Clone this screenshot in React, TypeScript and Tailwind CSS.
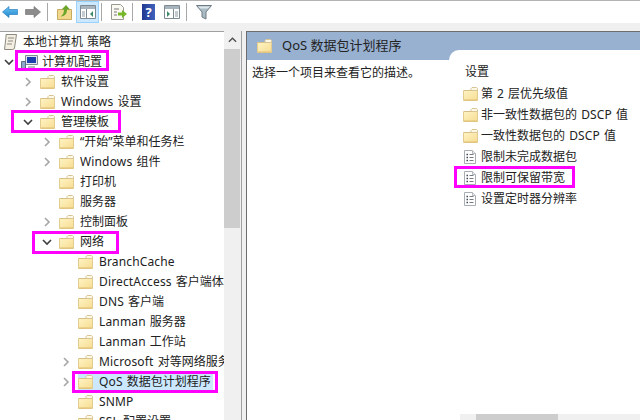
function Folder({ className = "" }: { className?: string }) {
  return (
    <svg viewBox="0 0 15 14" className={"w-[15px] h-[14px] shrink-0 " + className}>
      <defs>
        <linearGradient id="fold" x1="0" y1="0" x2="1" y2="1">
          <stop offset="0" stopColor="#fff4c4" />
          <stop offset="1" stopColor="#f6dc92" />
        </linearGradient>
      </defs>
      <path d="M0.500 3.500h14v10h-14z" fill="url(#fold)" stroke="#e2cc90" />
      <path d="M8 3.500V1.500l1-1h4.500l1 1v2z" fill="#fef9e6" stroke="#d8c596" />
      <path d="M1 3.500h7" stroke="#d6bf85" />
      <path d="M1 13h13" stroke="#dfbe72" />
    </svg>
  );
}

function PolicyIcon() {
  return (
    <svg viewBox="0 0 14 14" className="w-[14px] h-[14px] shrink-0">
      <path d="M1.500 0.500h8l3 3v10h-11z" fill="#fff" stroke="#a8adb3" />
      <path d="M9.500 .5v3h3" fill="#e8ecef" stroke="#b4b8bd" />
      <path d="M3.500 4.500h1.500M3.500 7.500h1.500M3.500 10.500h1.500" stroke="#3e4a56" strokeWidth="1.300" />
      <path d="M6.500 4.500h4M6.500 7.500h4M6.500 10.500h4" stroke="#767b82" />
    </svg>
  );
}

function Chevron({ open }: { open?: boolean }) {
  return (
    <svg viewBox="0 0 10 10" className="w-[10px] h-[10px]">
      {open ? (
        <path d="M1 3l4 4 4-4" fill="none" stroke="#3f3f3f" strokeWidth="1.600" />
      ) : (
        <path d="M3 1l4 4-4 4" fill="none" stroke="#a6a6a6" strokeWidth="1.600" />
      )}
    </svg>
  );
}

// Latin runs are a little wider in the reference than Noto Sans sets them
function Label({ text, className = "" }: { text: string; className?: string }) {
  return (
    <span className={"text-[12px] text-[#222] [word-spacing:1px] " + className}>
      {text.split(/([A-Za-z]+)/).map((part, i) =>
        i % 2 ? (
          <span key={i} className="tracking-[0.15px]">{part}</span>
        ) : (
          part
        ),
      )}
    </span>
  );
}

function TreeRow({ pl, chev, label, selected }: { pl: string; chev?: "open" | "closed"; label: string; selected?: boolean }) {
  return (
    <div className={"flex items-center h-5 whitespace-nowrap " + pl}>
      <div className="w-[12px] mr-[6px] shrink-0 flex justify-center">
        {chev && <Chevron open={chev === "open"} />}
      </div>
      <div className={"flex items-center " + (selected ? "bg-[#cce8ff] h-[18px] pr-[2px]" : "")}>
        <Folder />
        <Label text={label} className="ml-[6px]" />
      </div>
    </div>
  );
}

function Sep() {
  return <div className="w-px h-[18px] bg-[#a8a8a8] shrink-0" />;
}

function Toolbar() {
  return (
    <div className="h-[31px] shrink-0 bg-white border-t border-[#b4b4b4] flex flex-col">
      <div className="h-[22px] flex items-center">
        <svg viewBox="0 0 16 12" className="w-4 h-3 ml-[2px]">
          <defs>
            <linearGradient id="back" x1="0" y1="0" x2="0" y2="1">
              <stop offset="0" stopColor="#6cc4f2" />
              <stop offset="1" stopColor="#1f86d0" />
            </linearGradient>
          </defs>
          <path d="M.5 6l6.500-5.500v3h8.500v5H7v3z" fill="url(#back)" stroke="#2a7fbf" strokeLinejoin="round" strokeWidth=".7" />
        </svg>
        <svg viewBox="0 0 16 12" className="w-4 h-3 ml-[7px]">
          <path d="M15.500 6L9 .5v3H.5v5H9v3z" fill="#8c8c8c" stroke="#777" strokeLinejoin="round" strokeWidth=".7" />
        </svg>
        <div className="ml-[6px]"><Sep /></div>
        <svg viewBox="0 0 15 15" className="w-[15px] h-[15px] ml-[9px]">
          <path d="M0.500 4.500h14v10H.5z" fill="#f2d88c" stroke="#c9ab5e" />
          <path d="M9 0L4.500 4.500H7C7 8 6 10 3.500 11.500 8 11.500 10 8.500 10 4.500h3z" fill="#6aa52c" />
        </svg>
        <div className="ml-[4px] w-[23px] h-[22px] bg-[#cce8ff] border border-[#99d1ff] flex items-center justify-center">
          <svg viewBox="0 0 16 14" className="w-4 h-[14px]">
            <path d="M.5.5h15v13H.5z" fill="#fff" stroke="#7d8a94" />
            <path d="M1 1h14v3H1z" fill="#a8b4bd" />
            <path d="M6.500 4v9" stroke="#7d8a94" />
            <path d="M2 6h3v6H2z" fill="#c5ccd2" />
            <path d="M13 6l-3 3 3 3z" fill="#3f8a6a" />
          </svg>
        </div>
        <div className="ml-[2px]"><Sep /></div>
        <svg viewBox="0 0 17 16" className="w-[17px] h-4 ml-[8px]">
          <path d="M1.500.5h9l3 3v12h-12z" fill="#fbfaf2" stroke="#9a9a92" />
          <path d="M4 5h5M4 8h3M4 11h3" stroke="#777" />
          <path d="M8 8.500h4V6l5 4-5 4v-2.500H8z" fill="#76b82a" />
        </svg>
        <div className="ml-[5px]"><Sep /></div>
        <div className="ml-[9px] w-[13px] h-4 bg-gradient-to-r from-[#23398f] to-[#3f62bd] flex items-center justify-center text-white text-[13px] font-bold leading-none">?</div>
        <svg viewBox="0 0 16 14" className="w-4 h-[14px] ml-[9px]">
          <path d="M.5.5h15v13H.5z" fill="#fff" stroke="#7d8a94" />
          <path d="M1 1h14v3H1z" fill="#a8b4bd" />
          <path d="M9.500 4v9" stroke="#7d8a94" />
          <path d="M11 6h3v6h-3z" fill="#c5ccd2" />
          <path d="M3 6l3 3-3 3z" fill="#3f8a6a" />
        </svg>
        <div className="ml-[6px]"><Sep /></div>
        <svg viewBox="0 0 16 15" className="w-4 h-[15px] ml-[9px]">
          <path d="M.5.5h15L10 7v7l-4-2V7z" fill="#a9bcc6" stroke="#6f7a82" />
          <path d="M2 1.500h12l-2 2H4z" fill="#dfe6ea" />
        </svg>
      </div>
      <div className="flex-1 bg-[#f0f0f0]" />
    </div>
  );
}

const lvl2 = "pl-[22px]";
const lvl3 = "pl-[41px]";
const lvl4 = "pl-[60px]";

export default function App() {
  return (
    <div className="relative w-[640px] h-[420px] overflow-hidden flex flex-col bg-white font-['Noto_Sans','Noto_Sans_CJK_SC',sans-serif]">
      <Toolbar />
      <div className="flex flex-1 min-h-0 bg-[#f0f0f0]">
        <div className="w-[224px] shrink-0 bg-white overflow-hidden border-t border-[#a0a0a0]">
          <div className="flex items-center h-5 pl-[3px]">
            <svg viewBox="0 0 15 16" className="w-[15px] h-4 shrink-0">
              <path d="M3 .5h10.500l-2 13.500a2 2 0 01-2 1.500H1.500L3 3z" fill="#f4efe2" stroke="#8a8a80" />
              <path d="M5 4h6M5 7h5M4 10h5" stroke="#8a8a80" />
            </svg>
            <Label text="本地计算机 策略" className="ml-[5px]" />
          </div>
          <div className="flex items-center h-5 pl-[3px]">
            <div className="w-[12px] flex justify-center shrink-0"><Chevron open /></div>
            <svg viewBox="0 0 17 16" className="w-[17px] h-4 ml-[6px] shrink-0">
              <path d="M4.500 1.500h12v9h-12z" fill="#dfe6ef" stroke="#7f8a99" />
              <path d="M6 3h9v6H6z" fill="#1c3fae" />
              <path d="M0.500 7.500h4v8h-4z" fill="#8ea6c9" stroke="#5a6b86" />
              <path d="M7 12h7v2H7z" fill="#b5bcc6" />
            </svg>
            <Label text="计算机配置" className="ml-[4px]" />
          </div>
          <TreeRow pl={lvl2} chev="closed" label="软件设置" />
          <TreeRow pl={lvl2} chev="closed" label="Windows 设置" />
          <TreeRow pl={lvl2} chev="open" label="管理模板" />
          <TreeRow pl={lvl3} chev="closed" label="“开始”菜单和任务栏" />
          <TreeRow pl={lvl3} chev="closed" label="Windows 组件" />
          <TreeRow pl={lvl3} label="打印机" />
          <TreeRow pl={lvl3} label="服务器" />
          <TreeRow pl={lvl3} chev="closed" label="控制面板" />
          <TreeRow pl={lvl3} chev="open" label="网络" />
          <TreeRow pl={lvl4} label="BranchCache" />
          <TreeRow pl={lvl4} label="DirectAccess 客户端体验设置" />
          <TreeRow pl={lvl4} label="DNS 客户端" />
          <TreeRow pl={lvl4} label="Lanman 服务器" />
          <TreeRow pl={lvl4} label="Lanman 工作站" />
          <TreeRow pl={lvl4} chev="closed" label="Microsoft 对等网络服务" />
          <TreeRow pl={lvl4} chev="closed" label="QoS 数据包计划程序" selected />
          <TreeRow pl={lvl4} label="SNMP" />
          <TreeRow pl={lvl4} label="SSL 配置设置" />
        </div>
        <div className="w-4 shrink-0 flex flex-col bg-[#f0f0f0]">
          <div className="h-[18px] flex items-center justify-center">
            <svg viewBox="0 0 10 6" className="w-[9px] h-[6px]">
              <path d="M1 5l4-4 4 4" fill="none" stroke="#505050" strokeWidth="1.500" />
            </svg>
          </div>
          <div className="h-[179px] bg-[#cdcdcd]" />
        </div>
        <div className="w-px shrink-0 bg-[#a0a0a0] ml-px" />
        <div className="w-[4px] shrink-0" />
        <div className="flex-1 min-w-0 bg-white border-l border-t border-[#6d6d6d] flex flex-col">
          <div className="h-[28px] shrink-0 bg-[#98b1d1] flex items-center pl-[10px]">
            <Folder />
            <span className="ml-[10px] text-[13px] text-[#222] whitespace-nowrap">QoS 数据包计划程序</span>
          </div>
          <div className="flex flex-1 min-h-0">
            <div className="w-[202px] shrink-0 pl-[5px] pt-[4px] text-[12px] text-[#222] whitespace-nowrap">选择一个项目来查看它的描述。</div>
            <div className="flex-1 min-w-0 bg-white rounded-tl-[10px] -mt-[10px] pl-[14px] flex flex-col relative">
              <div className="h-[33px] flex items-center pt-[11px] pl-[2px] text-[12px] text-[#222]">设置</div>
              {["第 2 层优先级值", "非一致性数据包的 DSCP 值", "一致性数据包的 DSCP 值"].map((t) => (
                <div key={t} className="h-[21px] flex items-center whitespace-nowrap">
                  <Folder />
                  <Label text={t} className="ml-[3px]" />
                </div>
              ))}
              {["限制未完成数据包", "限制可保留带宽", "设置定时器分辨率"].map((t) => (
                <div key={t} className="h-[21px] flex items-center whitespace-nowrap">
                  <PolicyIcon />
                  <Label text={t} className="ml-[4px]" />
                </div>
              ))}
              <div className="absolute left-[11px] right-0 bottom-0 h-[6px] bg-[#f0f0f0] flex">
                <div className="w-[16px]" />
                <div className="w-[82px] bg-[#cdcdcd]" />
              </div>
            </div>
          </div>
        </div>
      </div>
      <div className="absolute left-[15px] top-[50px] w-[94px] h-[21px] border-[3px] border-[#f0f]" />
      <div className="absolute left-[11px] top-[110px] w-[110px] h-[23px] border-[3px] border-[#f0f]" />
      <div className="absolute left-[32px] top-[231px] w-[87px] h-[23px] border-[3px] border-[#f0f]" />
      <div className="absolute left-[72px] top-[371px] w-[146px] h-[22px] border-[3px] border-[#f0f]" />
      <div className="absolute left-[454px] top-[166px] w-[121px] h-[22px] border-[3px] border-[#f0f]" />
    </div>
  );
}
